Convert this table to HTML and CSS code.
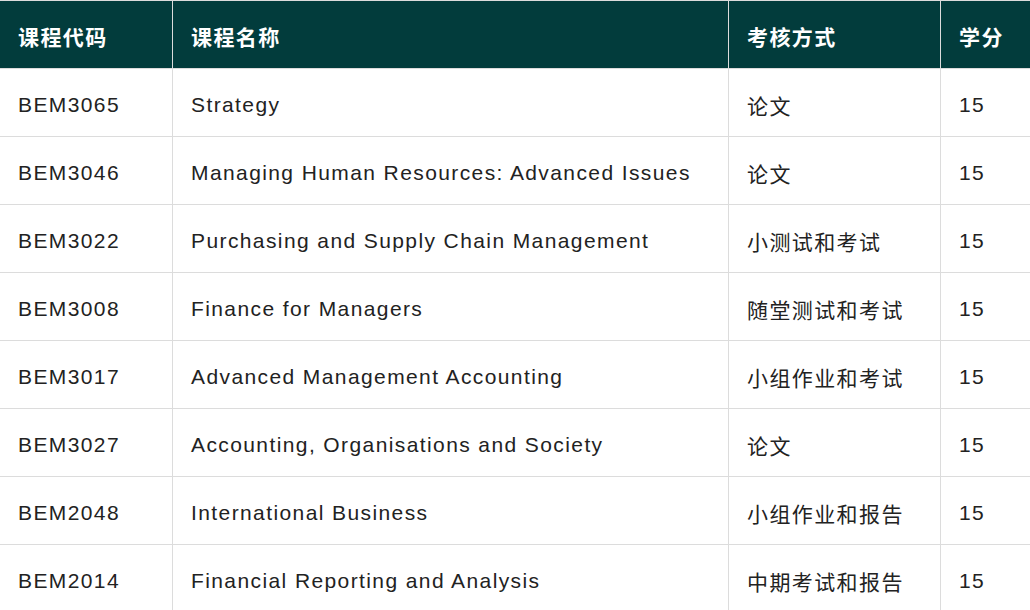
FILE: index.html
```html
<!DOCTYPE html>
<html lang="zh">
<head>
<meta charset="utf-8">
<link rel="stylesheet" href="styles.css">
</head>
<body>
<table class="courses">
  <colgroup>
    <col class="c-code">
    <col class="c-name">
    <col class="c-assess">
    <col class="c-credit">
  </colgroup>
  <thead>
    <tr><th>课程代码</th><th>课程名称</th><th>考核方式</th><th>学分</th></tr>
  </thead>
  <tbody>
    <tr><td>BEM3065</td><td>Strategy</td><td>论文</td><td>15</td></tr>
    <tr><td>BEM3046</td><td>Managing Human Resources: Advanced Issues</td><td>论文</td><td>15</td></tr>
    <tr><td>BEM3022</td><td>Purchasing and Supply Chain Management</td><td>小测试和考试</td><td>15</td></tr>
    <tr><td>BEM3008</td><td>Finance for Managers</td><td>随堂测试和考试</td><td>15</td></tr>
    <tr><td>BEM3017</td><td>Advanced Management Accounting</td><td>小组作业和考试</td><td>15</td></tr>
    <tr><td>BEM3027</td><td>Accounting, Organisations and Society</td><td>论文</td><td>15</td></tr>
    <tr><td>BEM2048</td><td>International Business</td><td>小组作业和报告</td><td>15</td></tr>
    <tr><td>BEM2014</td><td>Financial Reporting and Analysis</td><td>中期考试和报告</td><td>15</td></tr>
  </tbody>
</table>
</body>
</html>
```

FILE: styles.css
```css
html, body {
  margin: 0;
  padding: 0;
  background: #ffffff;
}

body {
  overflow: hidden;
  font-family: "Liberation Sans", "Noto Sans CJK SC", Arial, sans-serif;
}

.courses {
  border-collapse: collapse;
  table-layout: fixed;
  width: 1060px;
  margin-left: -1px;
  font-size: 21px;
  letter-spacing: 1.4px;
}

.c-code { width: 173px; }
.c-name { width: 556px; }
.c-assess { width: 212px; }
.c-credit { width: 119px; }

.courses th,
.courses td {
  border: 1px solid #dcdcdc;
  height: 68px;
  padding: 5px 18px 0 18px;
  text-align: left;
  vertical-align: middle;
  box-sizing: border-box;
  white-space: nowrap;
}

.courses thead th {
  background: #023c3c;
  color: #ffffff;
  font-weight: bold;
  padding-top: 3px;
}

.courses tbody td {
  color: #222222;
}
```
